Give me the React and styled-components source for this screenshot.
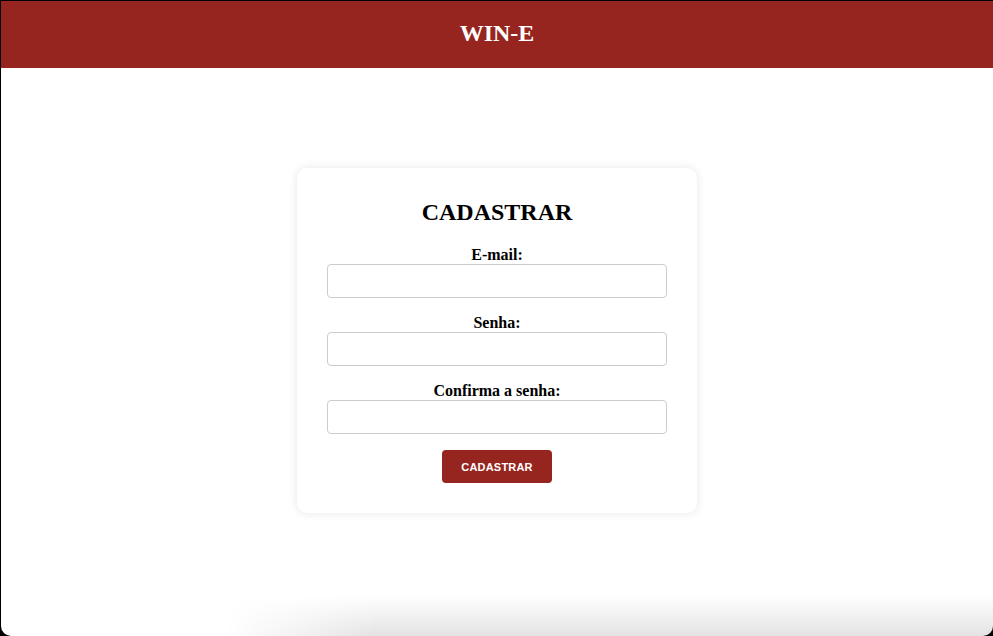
import React from "react";
import styled, { createGlobalStyle } from "styled-components";

const Global = createGlobalStyle`
  html, body {
    margin: 0;
    padding: 0;
    background: #000;
  }
  body {
    font-family: "Liberation Serif", "Times New Roman", serif;
  }
  * { box-sizing: border-box; }
`;

const Window = styled.div`
  position: relative;
  margin: 1px 0 0 1px;
  width: 992px;
  height: 635px;
  background: #fff;
  border-bottom-left-radius: 10px;
  border-bottom-right-radius: 10px;
  overflow: hidden;
  display: flex;
  flex-direction: column;

  &::after {
    content: "";
    position: absolute;
    left: 225px;
    right: 0;
    bottom: 0;
    height: 40px;
    pointer-events: none;
    background: linear-gradient(to bottom, rgba(0,0,0,0) 0%, rgba(0,0,0,0.11) 100%);
    -webkit-mask-image: linear-gradient(to right, transparent 0px, #000 150px);
    mask-image: linear-gradient(to right, transparent 0px, #000 150px);
  }
`;

const Header = styled.header`
  height: 67px;
  background: #962520;
  display: flex;
  align-items: center;
  justify-content: center;
  flex-shrink: 0;
  padding-bottom: 2px;
`;

const Brand = styled.h1`
  margin: 0;
  color: #fff;
  font-size: 24px;
  font-weight: bold;
  font-family: "Liberation Serif", "Times New Roman", serif;
`;

const Main = styled.main`
  flex: 1;
  display: flex;
  justify-content: center;
  align-items: flex-start;
  padding-top: 100px;
`;

const Card = styled.form`
  width: 400px;
  background: #fff;
  border-radius: 10px;
  box-shadow: 0 0 10px rgba(0, 0, 0, 0.1);
  padding: 31px 30px 30px;
  display: flex;
  flex-direction: column;
  align-items: stretch;
`;

const Title = styled.h2`
  margin: 0 0 20px;
  text-align: center;
  font-size: 24px;
  font-weight: bold;
  color: #000;
`;

const Field = styled.div`
  display: flex;
  flex-direction: column;
  margin-bottom: 16px;
`;

const Label = styled.label`
  text-align: center;
  font-size: 16px;
  font-weight: bold;
  color: #000;
  line-height: 18px;
`;

const Input = styled.input`
  height: 34px;
  width: 100%;
  border: 1px solid #cccccc;
  border-radius: 4px;
  padding: 0 8px;
  font-size: 14px;
  outline: none;
  background: #fff;
`;

const Button = styled.button`
  align-self: center;
  width: 110px;
  height: 33px;
  background: #962520;
  color: #fff;
  border: none;
  border-radius: 4px;
  font-family: "Liberation Sans", Arial, sans-serif;
  font-weight: bold;
  font-size: 11px;
  letter-spacing: 0.2px;
  text-transform: uppercase;
  cursor: pointer;
`;

export default function App() {
  return (
    <>
      <Global />
      <Window>
        <Header>
          <Brand>WIN-E</Brand>
        </Header>
        <Main>
          <Card onSubmit={(e) => e.preventDefault()}>
            <Title>CADASTRAR</Title>
            <Field>
              <Label htmlFor="email">E-mail:</Label>
              <Input id="email" type="email" />
            </Field>
            <Field>
              <Label htmlFor="senha">Senha:</Label>
              <Input id="senha" type="password" />
            </Field>
            <Field>
              <Label htmlFor="confirma">Confirma a senha:</Label>
              <Input id="confirma" type="password" />
            </Field>
            <Button type="submit">Cadastrar</Button>
          </Card>
        </Main>
      </Window>
    </>
  );
}
